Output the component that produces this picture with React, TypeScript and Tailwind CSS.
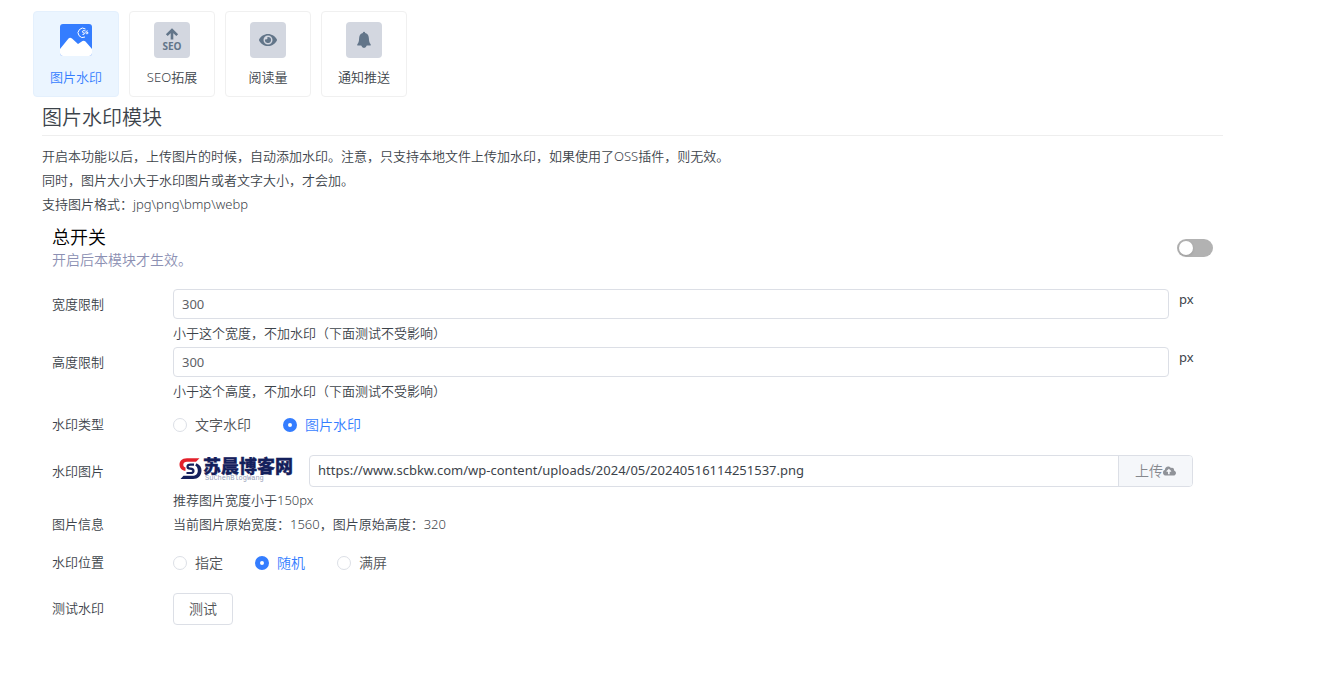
import React, { useState } from 'react';
import { FaEye, FaCloudUploadAlt } from 'react-icons/fa';

interface ModuleTab {
  id: string;
  name: string;
  icon: React.ReactNode;
}

interface Option {
  value: string;
  label: string;
}

const ImageIcon = () => (
  <svg viewBox="0 0 32 32" className="w-8 h-8">
    <rect width="32" height="32" rx="3" fill="#347dff" />
    <path d="M0 25 L8.500 14.500 Q10 13 12 14.500 L18 20 L22.500 17 Q24 16.300 25.500 17.500 L32 25 V29 Q32 32 29 32 H3 Q0 32 0 29 Z" fill="#fff" />
    <path d="M25.500 5 A4.700 4.700 0 1 0 25 13" fill="none" stroke="#fff" strokeWidth="1" />
    <path d="M25.500 6.800 Q22 6 22.300 7.900 Q22.500 9 24.500 9 Q24.600 10.900 22.500 10.500 M27.800 6.800 Q25.500 7 25.700 8.800 Q26 10.300 27.800 9.600 L28 8.500 H26.500" fill="none" stroke="#fff" strokeWidth="0.900" />
  </svg>
);

const SeoIcon = () => (
  <svg viewBox="0 0 36 36" className="w-9 h-9">
    <path d="M18 17.500 V8.500 M12.800 13.200 L18 8 L23.200 13.200" fill="none" stroke="#627589" strokeWidth="2.600" />
    <text x="18" y="28" textAnchor="middle" fontSize="10" fontWeight="700" fill="#627589" fontFamily="Open Sans, sans-serif">SEO</text>
  </svg>
);

const BellIcon = () => (
  <svg viewBox="0 0 16 18" className="w-4 h-[18px]">
    <path d="M8 0.800 Q9 0.800 9.200 1.900 C12 2.600 12.800 4.800 12.900 7.500 C13 10.500 13.500 12 14.700 13.200 V14.600 H10.800 Q10 17 8 17 Q6 17 5.200 14.600 H1.300 V13.200 C2.500 12 3 10.500 3.100 7.500 C3.200 4.800 4 2.600 6.800 1.900 Q7 0.800 8 0.800 Z" fill="#627589" />
  </svg>
);

const SiteLogo = () => (
  <svg viewBox="0 0 120 30" className="w-[120px] h-[30px] shrink-0 overflow-visible" role="img" aria-label="苏晨博客网">
    <path d="M26.500 3.200 H14 C8.500 3.200 6.500 6.500 6.500 9.500 C6.500 13 9 15.800 12.500 15.800 V12.500 C11 12 10.300 11 10.300 9.700 C10.300 8 11.800 6.700 14 6.700 H23 Z" fill="#e3202b" />
    <path d="M23.500 8.200 C27 9.800 28.500 12.500 28.500 15.500 C28.500 20.500 25 24 20 24 H7.500 L10.500 20.700 H19.500 C22.800 20.700 24.800 18.800 24.800 15.700 C24.800 13.500 24.200 11.800 22.200 10.500 Z" fill="#14205c" />
    <path d="M21 9.700 H17.500 Q14.500 9.700 14.500 11.700 Q14.500 13.500 17.300 13.700 Q20.500 14 20.500 16 Q20.500 18 17.500 18 H13.500" fill="none" stroke="#14205c" strokeWidth="2.200" />
    <text x="30" y="18" fontSize="18" fontWeight="900" fill="#14205c" stroke="#14205c" strokeWidth="0.300" fontFamily="Noto Sans CJK SC, sans-serif">苏晨博客网</text>
    <text x="32" y="25" fontSize="7" fill="#9a9fba" fontFamily="Liberation Mono, monospace">SuChenBlogWang</text>
  </svg>
);

const MODULES: ModuleTab[] = [
  { id: 'watermark', name: '图片水印', icon: <ImageIcon /> },
  { id: 'seo', name: 'SEO拓展', icon: <SeoIcon /> },
  { id: 'views', name: '阅读量', icon: <FaEye className="w-[18px] h-4 text-[#627589]" /> },
  { id: 'push', name: '通知推送', icon: <BellIcon /> },
];

const TYPES: Option[] = [
  { value: 'text', label: '文字水印' },
  { value: 'image', label: '图片水印' },
];

const POSITIONS: Option[] = [
  { value: 'fixed', label: '指定' },
  { value: 'random', label: '随机' },
  { value: 'full', label: '满屏' },
];

interface LimitFieldProps {
  id: string;
  label: string;
  hint: string;
  value: string;
  onChange: (value: string) => void;
}

const LimitField: React.FC<LimitFieldProps> = ({ id, label, hint, value, onChange }) => (
  <div className="flex">
    <label htmlFor={id} className="w-[121px] shrink-0 leading-[30px]">{label}</label>
    <div className="flex-1">
      <input
        id={id}
        type="text"
        className="block w-full h-[30px] px-2 rounded border border-[#dcdfe6] font-normal text-[#606266] outline-none focus:border-[#347dff]"
        value={value}
        onChange={(e) => onChange(e.target.value)}
      />
      <p className="leading-7">{hint}</p>
    </div>
    <span className="w-11 ml-[10px] leading-5 font-normal">px</span>
  </div>
);

interface RadioFieldProps {
  name: string;
  label: string;
  options: Option[];
  value: string;
  onChange: (value: string) => void;
}

const RadioField: React.FC<RadioFieldProps> = ({ name, label, options, value, onChange }) => (
  <div role="radiogroup" aria-label={label} className="flex items-center h-10">
    <span className="w-[121px] shrink-0">{label}</span>
    <div className="flex gap-8">
      {options.map((option) => (
        <label
          key={option.value}
          className={`flex items-center gap-2 text-sm cursor-pointer ${value === option.value ? 'text-[#347dff]' : 'text-[#505256]'}`}
        >
          <input
            type="radio"
            name={name}
            className="appearance-none w-[14px] h-[14px] rounded-full bg-white border border-[#dcdfe6] checked:border-[5px] checked:border-[#347dff]"
            checked={value === option.value}
            onChange={() => onChange(option.value)}
          />
          {option.label}
        </label>
      ))}
    </div>
  </div>
);

const App: React.FC = () => {
  const [activeModule, setActiveModule] = useState('watermark');
  const [enabled, setEnabled] = useState(false);
  const [minWidth, setMinWidth] = useState('300');
  const [minHeight, setMinHeight] = useState('300');
  const [type, setType] = useState('image');
  const [position, setPosition] = useState('random');
  const [imageUrl, setImageUrl] = useState('https://www.scbkw.com/wp-content/uploads/2024/05/20240516114251537.png');

  return (
    <div className="min-h-screen bg-white pt-[11px] pb-10 pl-[33px] pr-[95px] text-[13px] font-[350] text-[#3c434a] font-['Noto_Sans','Noto_Sans_CJK_SC',sans-serif]">
      <nav className="flex flex-wrap gap-[10px]">
        {MODULES.map((item) => (
          <button
            key={item.id}
            type="button"
            onClick={() => setActiveModule(item.id)}
            className={`w-[86px] h-[86px] pt-[10px] flex flex-col items-center gap-2 rounded border cursor-pointer ${activeModule === item.id ? 'bg-[#ebf5ff] border-[#e4f0fd] text-[#347dff]' : 'bg-white border-[#f0f0f0]'}`}
          >
            <span className={`w-9 h-9 flex items-center justify-center rounded-sm ${activeModule === item.id ? '' : 'bg-[#d3d7e0]'}`}>
              {item.icon}
            </span>
            <span className="leading-[22px]">{item.name}</span>
          </button>
        ))}
      </nav>

      <main className="pl-[9px]">
        <h1 className="pt-[6px] pb-[2px] text-xl leading-[30px] font-[350] border-b border-[#eeeeee]">图片水印模块</h1>
        <div className="mt-2 leading-6">
          <p>开启本功能以后，上传图片的时候，自动添加水印。注意，只支持本地文件上传加水印，如果使用了OSS插件，则无效。</p>
          <p>同时，图片大小大于水印图片或者文字大小，才会加。</p>
          <p>支持图片格式：jpg\png\bmp\webp</p>
        </div>

        <div className="flex items-center justify-between px-[10px] pt-[9px] pb-[18px]">
          <div>
            <label htmlFor="enabled" className="block text-lg leading-6 text-black">总开关</label>
            <p className="text-sm leading-[22px] text-[#8c90b3]">开启后本模块才生效。</p>
          </div>
          <input
            id="enabled"
            type="checkbox"
            role="switch"
            className="appearance-none w-9 h-[18px] p-[2px] rounded-full bg-[#b2b2b2] cursor-pointer before:block before:w-[14px] before:h-[14px] before:rounded-full before:bg-white before:shadow checked:bg-[#347dff] checked:before:ml-[18px]"
            checked={enabled}
            onChange={(e) => setEnabled(e.target.checked)}
          />
        </div>

        <form className="pl-[10px]" onSubmit={(e) => e.preventDefault()}>
          <LimitField id="min-width" label="宽度限制" hint="小于这个宽度，不加水印（下面测试不受影响）" value={minWidth} onChange={setMinWidth} />
          <LimitField id="min-height" label="高度限制" hint="小于这个高度，不加水印（下面测试不受影响）" value={minHeight} onChange={setMinHeight} />
          <RadioField name="type" label="水印类型" options={TYPES} value={type} onChange={setType} />

          <div className="flex mt-[10px] pr-[30px]">
            <label htmlFor="image-url" className="w-[121px] shrink-0 leading-8">水印图片</label>
            <div className="flex-1">
              <div className="flex">
                <SiteLogo />
                <div className="flex flex-1 h-8 ml-4 rounded border border-[#dcdfe6] overflow-hidden">
                  <input
                    id="image-url"
                    type="text"
                    className="flex-1 min-w-0 px-2 font-normal text-[#3c434a] outline-none"
                    value={imageUrl}
                    onChange={(e) => setImageUrl(e.target.value)}
                  />
                  <button type="button" className="flex items-center justify-center w-[74px] border-l border-[#dcdfe6] bg-[#f5f7fa] text-sm text-[#85888e] cursor-pointer">
                    上传<FaCloudUploadAlt className="w-[13px] h-3 text-[#909399]" />
                  </button>
                </div>
              </div>
              <p className="leading-[26px]">推荐图片宽度小于150px</p>
            </div>
          </div>

          <div className="flex leading-[22px] mb-2">
            <span className="w-[121px] shrink-0">图片信息</span>
            <p>当前图片原始宽度：1560，图片原始高度：320</p>
          </div>

          <RadioField name="position" label="水印位置" options={POSITIONS} value={position} onChange={setPosition} />

          <div className="flex items-center mt-[10px]">
            <span className="w-[121px] shrink-0">测试水印</span>
            <button type="button" className="w-[60px] h-8 rounded border border-[#dcdfe6] bg-white text-sm text-[#505256] cursor-pointer">测试</button>
          </div>
        </form>
      </main>
    </div>
  );
};

export default App;
